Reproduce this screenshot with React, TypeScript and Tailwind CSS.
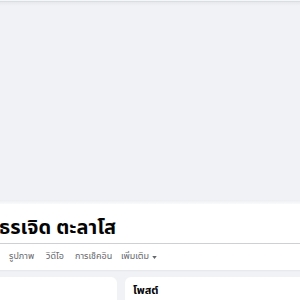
import React from 'react';

const tabs = [
  { label: 'รูปภาพ', w: 'w-[37px]' },
  { label: 'วิดีโอ', w: 'w-[29px]' },
  { label: 'การเช็คอิน', w: 'w-[46px]' },
];

export default function App() {
  return (
    <div className="w-[300px] h-[300px] overflow-hidden bg-[#f0f2f5] font-['Noto_Sans_Thai','Noto_Sans',sans-serif] text-[#050505]">
      {/* top edge */}
      <div className="h-px bg-[#f5f6f7]" />
      <div className="h-px bg-[#dadde1]" />
      <div className="h-[4px] bg-gradient-to-b from-[#e6e8ec] to-[#f0f2f5]" />

      {/* cover */}
      <div className="h-[194px] bg-[#f0f2f5]" />
      <div className="h-[4px] bg-gradient-to-b from-[#eceef1] to-[#fafbfc]" />

      {/* header */}
      <div className="bg-white">
        <div className="h-[39px] flex items-end pb-[3px]">
          <h1 className="ml-[-1px] text-[20px] leading-[24px] font-bold">ธรเจิด ตะลาโส</h1>
        </div>
        <div className="h-px bg-[#ced0d4]" />
        <div className="h-[26px] pl-[9px] flex items-center text-[9px] font-normal text-[#65676b]">
          {tabs.map(t => (
            <span key={t.label} className={`${t.w} shrink-0 whitespace-nowrap`}>{t.label}</span>
          ))}
          <span className="flex items-center gap-[3px] whitespace-nowrap">
            เพิ่มเติม
            <svg width="5" height="3" viewBox="0 0 6 4"><path d="M0 0h6L3 4z" fill="#65676b" /></svg>
          </span>
        </div>
      </div>
      <div className="h-[2px] bg-gradient-to-b from-[#e4e6eb] to-[#f0f2f5]" />

      {/* content */}
      <div className="mt-[5px] flex gap-[8px]">
        <div className="w-[117px] h-[40px] bg-white rounded-r-[6px]" />
        <div className="flex-1 h-[40px] bg-white rounded-l-[6px] pl-[8px] pt-[6px]">
          <h2 className="text-[11px] leading-[16px] font-bold">โพสต์</h2>
        </div>
      </div>
    </div>
  );
}
